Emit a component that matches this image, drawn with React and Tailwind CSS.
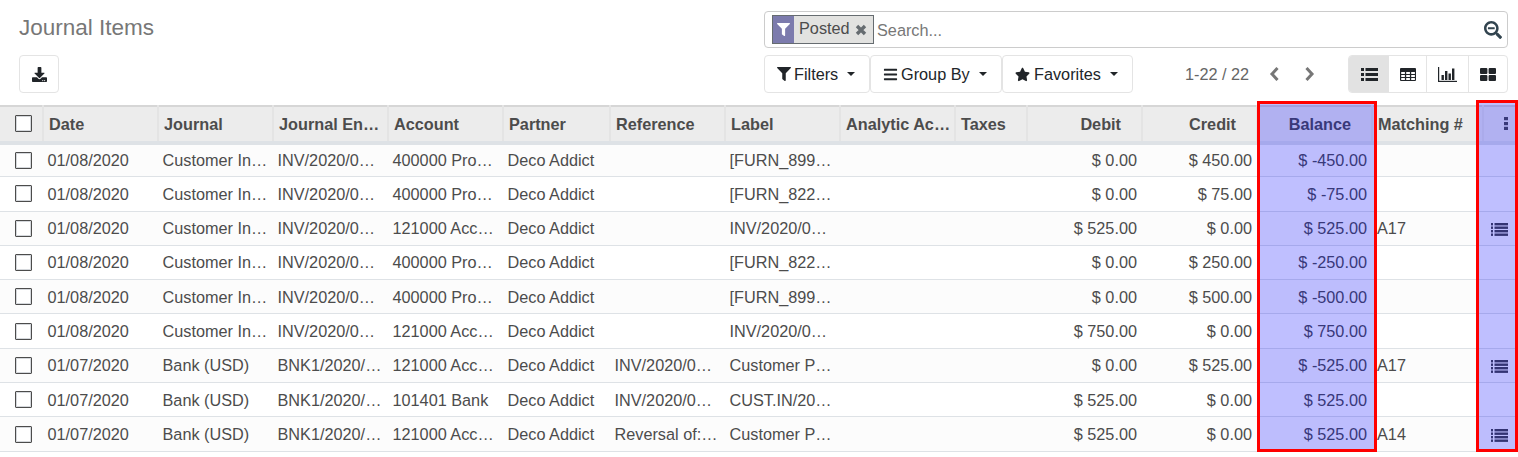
import React from "react";
import { FaFilter, FaBars, FaStar, FaDownload, FaSearchMinus } from "react-icons/fa";

const cols = [
  ["Date", 115], ["Journal", 115], ["Journal Entry", 115], ["Account", 115], ["Partner", 107], ["Reference", 115], ["Label", 115],
  ["Analytic Account", 115], ["Taxes", 72], ["Debit", 115, 1], ["Credit", 115, 1], ["Balance", 115, 1], ["Matching #", 111],
];
const rows = [
  ["01/08/2020","Customer Invoices","INV/2020/0001","400000 Product Sales","Deco Addict","","[FURN_8999] Three-Seat Sofa","$ 0.00","$ 450.00","$ -450.00",""],
  ["01/08/2020","Customer Invoices","INV/2020/0001","400000 Product Sales","Deco Addict","","[FURN_8220] Four Person Desk","$ 0.00","$ 75.00","$ -75.00",""],
  ["01/08/2020","Customer Invoices","INV/2020/0001","121000 Account Receivable","Deco Addict","","INV/2020/0001","$ 525.00","$ 0.00","$ 525.00","A17"],
  ["01/08/2020","Customer Invoices","INV/2020/0002","400000 Product Sales","Deco Addict","","[FURN_8220] Four Person Desk","$ 0.00","$ 250.00","$ -250.00",""],
  ["01/08/2020","Customer Invoices","INV/2020/0002","400000 Product Sales","Deco Addict","","[FURN_8999] Three-Seat Sofa","$ 0.00","$ 500.00","$ -500.00",""],
  ["01/08/2020","Customer Invoices","INV/2020/0002","121000 Account Receivable","Deco Addict","","INV/2020/0002","$ 750.00","$ 0.00","$ 750.00",""],
  ["01/07/2020","Bank (USD)","BNK1/2020/0001","121000 Account Receivable","Deco Addict","INV/2020/0001","Customer Payment","$ 0.00","$ 525.00","$ -525.00","A17"],
  ["01/07/2020","Bank (USD)","BNK1/2020/0001","101401 Bank","Deco Addict","INV/2020/0001","CUST.IN/2020/0001","$ 525.00","$ 0.00","$ 525.00",""],
  ["01/07/2020","Bank (USD)","BNK1/2020/0002","121000 Account Receivable","Deco Addict","Reversal of: INV/2020/0001","Customer Payment","$ 525.00","$ 0.00","$ 525.00","A14"],
];

function Check() {
  return <span className="block w-[17px] h-[17px] border border-[#4c4c4c] rounded-[1px] bg-white shadow-[inset_0_0_0_1px_#d5d8dc]" />;
}
function Btn({ children, className = "" }) {
  return <button className={`h-[38px] flex items-center border border-[#e4e4e4] rounded-[4px] bg-white text-[#212529] ${className}`}>{children}</button>;
}
function Caret() {
  return <span className="ml-[9px] w-0 h-0 border-x-[4px] border-x-transparent border-t-[4px] border-t-[#212529]" />;
}
function Chevron({ d, className = "" }) {
  return (
    <svg viewBox="0 0 10 14" className={`w-[10px] h-[14px] ${className}`}>
      <path d={d} fill="none" stroke="#777777" strokeWidth="3" />
    </svg>
  );
}
function ListIcon({ n, className = "" }) {
  const step = n === 3 ? 5 : 3.5;
  const ys = Array.from({ length: n }, (_, i) => i * step);
  return (
    <svg viewBox="0 0 17 13" className={`w-[17px] h-[13px] ${className}`} fill="currentColor">
      {ys.map((y) => (
        <g key={y}>
          <rect x="0" y={y} width={n === 3 ? 3 : 2} height={n === 3 ? 3 : 2.4} />
          <rect x={n === 3 ? 4.5 : 3.5} y={y} width={n === 3 ? 12.5 : 13.5} height={n === 3 ? 3 : 2.4} />
        </g>
      ))}
    </svg>
  );
}
function TableIcon() {
  return (
    <svg viewBox="0 0 16 13" className="w-[16px] h-[13px]">
      <rect x="0" y="0" width="16" height="13" rx="1" fill="#212529" />
      {[1.2, 6.2, 11.2].flatMap((x) => [4, 7, 10].map((y) => <rect key={`${x}-${y}`} x={x} y={y} width="3.7" height="2" fill="#ffffff" />))}
    </svg>
  );
}
function ChartIcon() {
  return (
    <svg viewBox="0 0 19 15" className="w-[19px] h-[15px]" fill="#212529">
      <rect x="0" y="0" width="1.2" height="15" />
      <rect x="0" y="13.8" width="19" height="1.2" />
      <rect x="3.5" y="8" width="2.4" height="5" />
      <rect x="7" y="4" width="2.4" height="9" />
      <rect x="10.5" y="6.5" width="2.4" height="6.5" />
      <rect x="14" y="1.5" width="2.4" height="11.5" />
    </svg>
  );
}
function ThLargeIcon() {
  return (
    <svg viewBox="0 0 16 13" className="w-[16px] h-[13px]" fill="#212529">
      <rect x="0" y="0" width="7.4" height="5.9" rx="1" />
      <rect x="8.6" y="0" width="7.4" height="5.9" rx="1" />
      <rect x="0" y="7.1" width="7.4" height="5.9" rx="1" />
      <rect x="8.6" y="7.1" width="7.4" height="5.9" rx="1" />
    </svg>
  );
}

export default function App() {
  return (
    <div className="relative w-[1518px] h-[457px] overflow-hidden bg-white text-[16.25px] text-[#4c4c4c] font-['Liberation_Sans',Arial,sans-serif]">
      <div className="h-[105px] flex justify-between pl-[19px] pr-[10px]">
        <div className="flex flex-col">
          <h1 className="mt-[14px] h-[27px] text-[22.5px] leading-[27px] text-[#777777]">Journal Items</h1>
          <Btn className="mt-[14px] w-[40px] justify-center"><FaDownload className="text-[#212529] text-[15px]" /></Btn>
        </div>
        <div className="w-[744px] flex flex-col pt-[11px]">
          <div className="h-[37px] flex items-center border border-[#cccccc] rounded-[4px] pl-[7px] pr-[5px]">
            <span className="h-[29px] w-[102px] flex items-center bg-[#e2e2e0] border border-[#666c70]">
              <span className="w-[21px] h-full flex items-center justify-center bg-[#7c7bad]"><FaFilter className="text-white text-[13px]" /></span>
              <span className="ml-[5px] mb-[3px] text-[#4c4c4c]">Posted</span>
              <svg viewBox="0 0 12 12" className="ml-[5px] w-[12px] h-[12px]"><path d="M2 2 L10 10 M10 2 L2 10" stroke="#666c70" strokeWidth="3.4" /></svg>
            </span>
            <span className="ml-[3px] mt-[1px] text-[#777777]">Search...</span>
            <FaSearchMinus className="ml-auto text-[18px] text-[#32444f]" />
          </div>
          <div className="mt-[7px] flex items-center">
            <Btn className="w-[106px] pl-[12px]"><FaFilter className="text-[14px] mr-[3px]" />Filters<Caret /></Btn>
            <Btn className="w-[132px] pl-[12px]"><FaBars className="text-[15px] mr-[3px]" />Group By<Caret /></Btn>
            <Btn className="w-[131px] pl-[12px]"><FaStar className="text-[15px] mr-[4px]" />Favorites<Caret /></Btn>
            <span className="ml-[52px] w-[65px] text-[#666666]">1-22 / 22</span>
            <Chevron d="M8.5 1 L3 7 L8.5 13" className="ml-[19px]" />
            <Chevron d="M1.5 1 L7 7 L1.5 13" className="ml-[26px]" />
            <div className="ml-auto h-[38px] flex border border-[#e4e4e4] rounded-[4px] text-[#212529] overflow-hidden">
              <span className="w-[40px] flex items-center justify-center bg-[#e2e2e2]"><ListIcon n={3} /></span>
              <span className="w-[38px] flex items-center justify-center border-r border-[#e4e4e4]"><TableIcon /></span>
              <span className="w-[42px] flex items-center justify-center border-r border-[#e4e4e4]"><ChartIcon /></span>
              <span className="w-[38px] flex items-center justify-center"><ThLargeIcon /></span>
            </div>
          </div>
        </div>
      </div>

      <table className="table-fixed w-[1515px] border-collapse">
        <colgroup>
          <col className="w-[43px]" />
          {cols.map(([n, w]) => <col key={n} style={{ width: w }} />)}
          <col className="w-[32px]" />
        </colgroup>
        <thead>
          <tr className="h-[36.5px] bg-[#ececec] border-t-2 border-t-[#d6d6d6] border-b-4 border-b-[#dee2e6]">
            <th className="pl-[15px]"><Check /></th>
            {cols.map(([n, , r]) => (
              <th key={n} className={`pl-[5px] pt-[1px] truncate font-bold border-l-2 border-l-[#e4e4e4] ${r ? "text-right pr-[20px]" : n === "Analytic Account" ? "text-left pr-[3px]" : "text-left pr-[6px]"}`}>{n}</th>
            ))}
            <th className="border-l-2 border-l-[#e4e4e4]">
              <svg viewBox="0 0 4 13" className="ml-[20px] w-[4px] h-[13px]" fill="#4c4c4c"><rect y="0" width="4" height="3.2" /><rect y="5" width="4" height="3.2" /><rect y="9.8" width="4" height="3.2" /></svg>
            </th>
          </tr>
        </thead>
        <tbody>
          {rows.map((r, i) => (
            <tr key={i} className={`h-[34.3px] border-b border-b-[#dee2e6] ${i % 2 === 0 ? "bg-[#fcfcfc]" : "bg-white"}`}>
              <td className="pl-[15px]"><Check /></td>
              {r.slice(0, 7).map((c, j) => <td key={j} className="pl-[4.5px] pr-[4px] truncate">{c}</td>)}
              <td /><td />
              {r.slice(7, 10).map((c, j) => <td key={j} className="px-[4px] pr-[5px] text-right truncate">{c}</td>)}
              <td className="pl-[5px] truncate">{r[10]}</td>
              <td className="text-center">{r[10] && <ListIcon n={4} className="inline-block text-[#444444]" />}</td>
            </tr>
          ))}
        </tbody>
      </table>

      <div className="absolute left-[1257px] top-[101px] w-[120px] h-[351px] border-[3px] border-[#ff0000] bg-[rgba(0,0,255,0.25)]" />
      <div className="absolute left-[1476px] top-[100px] w-[42px] h-[352px] border-[3px] border-[#ff0000] bg-[rgba(0,0,255,0.25)]" />
    </div>
  );
}
